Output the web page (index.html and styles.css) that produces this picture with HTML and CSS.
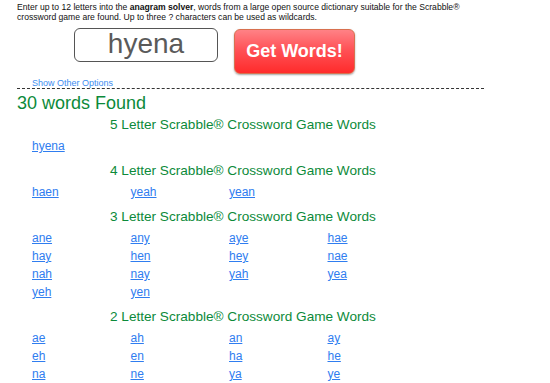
FILE: index.html
```html
<!DOCTYPE html>
<html>
<head>
<meta charset="utf-8">
<link rel="stylesheet" href="styles.css">
</head>
<body>
<div class="page">
  <p class="intro">Enter up to 12 letters into the <b>anagram solver</b>, words from a large open source dictionary suitable for the Scrabble&reg; crossword game are found. Up to three ? characters can be used as wildcards.</p>
  <div class="form">
    <div class="input">hyena</div>
    <div class="button">Get Words!</div>
  </div>
  <a class="options" href="#">Show Other Options</a>
  <div class="rule"></div>
  <h1 class="found">30 words Found</h1>

  <h2 class="heading">5 Letter Scrabble&reg; Crossword Game Words</h2>
  <div class="words">
    <a href="#">hyena</a>
  </div>

  <h2 class="heading">4 Letter Scrabble&reg; Crossword Game Words</h2>
  <div class="words">
    <a href="#">haen</a><a href="#">yeah</a><a href="#">yean</a>
  </div>

  <h2 class="heading">3 Letter Scrabble&reg; Crossword Game Words</h2>
  <div class="words">
    <a href="#">ane</a><a href="#">any</a><a href="#">aye</a><a href="#">hae</a>
    <a href="#">hay</a><a href="#">hen</a><a href="#">hey</a><a href="#">nae</a>
    <a href="#">nah</a><a href="#">nay</a><a href="#">yah</a><a href="#">yea</a>
    <a href="#">yeh</a><a href="#">yen</a>
  </div>

  <h2 class="heading">2 Letter Scrabble&reg; Crossword Game Words</h2>
  <div class="words">
    <a href="#">ae</a><a href="#">ah</a><a href="#">an</a><a href="#">ay</a>
    <a href="#">eh</a><a href="#">en</a><a href="#">ha</a><a href="#">he</a>
    <a href="#">na</a><a href="#">ne</a><a href="#">ya</a><a href="#">ye</a>
  </div>
</div>
</body>
</html>
```

FILE: styles.css
```css
html, body {
  margin: 0;
  padding: 0;
  background: #ffffff;
  font-family: "Liberation Sans", Arial, sans-serif;
  overflow: hidden;
}
.page {
  padding: 2px 0 0 17px;
  width: 467px;
}
.intro {
  margin: 0;
  font-size: 8.6px;
  line-height: 10px;
  color: #111;
}
.form {
  display: flex;
  align-items: flex-start;
  gap: 16px;
  margin: 6px 0 0 57px;
}
.input {
  box-sizing: border-box;
  width: 144px;
  height: 34px;
  border: 1.5px solid #555;
  border-radius: 6px;
  font-size: 28px;
  line-height: 30px;
  color: #5a5a5a;
  text-align: center;
}
.button {
  box-sizing: border-box;
  width: 121px;
  height: 45px;
  margin-top: 1px;
  border: 1px solid #d8704f;
  border-radius: 6px;
  background: linear-gradient(#ff8286 0%, #ff5257 45%, #ff2b2b 100%);
  box-shadow: 0 1px 2px rgba(0,0,0,0.35);
  color: #fff;
  font-weight: bold;
  font-size: 18px;
  line-height: 43px;
  text-align: center;
}
.options {
  display: block;
  margin: 4px 0 0 15px;
  font-size: 9px;
  line-height: 10px;
  color: #3d8cf0;
  text-decoration: none;
}
.rule {
  border-top: 1px dashed #333;
  height: 0;
}
.found {
  margin: 4px 0 0 0;
  font-weight: normal;
  font-size: 18px;
  line-height: 20px;
  color: #0c8a3a;
}
.heading {
  margin: 2px 0 2px 93px;
  font-weight: normal;
  font-size: 13.6px;
  line-height: 20px;
  color: #0c8a3a;
}
.words {
  display: grid;
  grid-template-columns: repeat(4, 98.5px);
  padding-left: 15px;
  margin: 1px 0 6px 0;
}
.words a {
  font-size: 12px;
  line-height: 18px;
  color: #2f7df0;
  text-decoration: underline;
}
```
